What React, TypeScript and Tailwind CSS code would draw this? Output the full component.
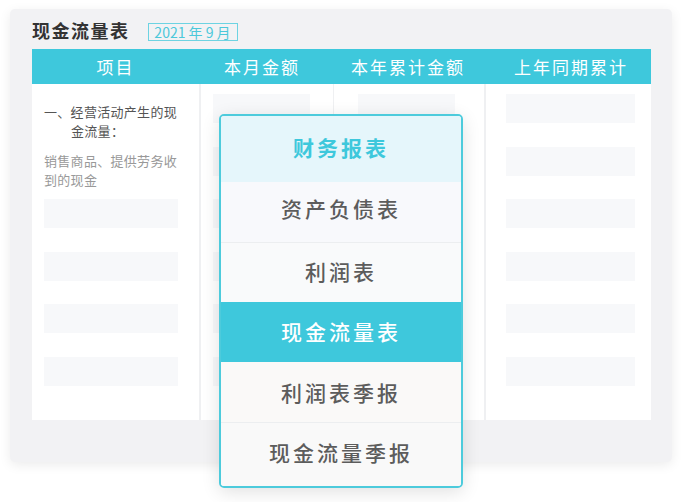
import React from "react";

const FONT = { fontFamily: '"Noto Sans CJK SC", "Noto Sans", sans-serif' };

const headers = ["项目", "本月金额", "本年累计金额", "上年同期累计"];
const menu = ["资产负债表", "利润表", "现金流量表", "利润表季报", "现金流量季报"];
const rowBg = ["bg-[#f8f9fc]", "bg-[#f9fafb]", "bg-[#3ec8dc]", "bg-[#faf9f8]", "bg-[#f9f9f9]"];
const rowPad = ["pb-[7px]", "pb-[1px]", "", "pt-[1px]", "pb-[4px]"];

function Bars({ count, w }: { count: number; w: string }) {
  return (
    <div className="flex flex-col gap-[23.6px]">
      {Array.from({ length: count }).map((_, i) => (
        <div key={i} className={`h-[29px] ${w} bg-[#f7f8fa]`} />
      ))}
    </div>
  );
}

export default function App() {
  return (
    <div className="relative w-[682px] h-[502px] bg-white overflow-hidden" style={FONT}>
      {/* report card */}
      <div className="ml-[10px] pt-[9px]">
        <div className="w-[662px] h-[453px] rounded-[5px] bg-[#f2f2f4] shadow-[0_3px_12px_rgba(0,0,0,0.08)] px-[22px] pt-[12px]">
          <div className="flex items-center h-[19px] mb-[9px]">
            <span className="text-[18px] leading-[19px] font-bold text-[#333] tracking-[1.5px]">现金流量表</span>
            <span className="ml-[18px] mt-[2px] w-[90px] h-[18px] border border-[#6dd3e2] flex items-center justify-center text-[14px] leading-none text-[#4cc8da]">
              2021 年 9 月
            </span>
          </div>

          {/* table */}
          <div className="w-[619px]">
            <div className="grid grid-cols-[167px_126px_166px_160px] h-[35px] bg-[#3ec8dc]">
              {headers.map((h) => (
                <div key={h} className="flex items-center justify-center text-white text-[17px] tracking-[2px]">
                  {h}
                </div>
              ))}
            </div>
            <div className="grid grid-cols-[167px_132px_150px_165px] gap-x-[1.5px] h-[336px] bg-[#eff0f2]">
              <div className="bg-white pl-[12px] pr-[15px] pt-[18px]">
                <p className="text-[13px] leading-[19px] tracking-[0.3px] text-[#555] pl-[27px] -indent-[27px]">
                  一、经营活动产生的现金流量：
                </p>
                <p className="mt-[11px] text-[13px] leading-[19px] tracking-[0.3px] text-[#999]">
                  销售商品、提供劳务收到的现金
                </p>
                <div className="mt-[10px]">
                  <Bars count={4} w="w-[134px]" />
                </div>
              </div>
              <div className="bg-white pl-[12px] pt-[10px]">
                <Bars count={6} w="w-[97px]" />
              </div>
              <div className="bg-white pl-[24px] pt-[10px]">
                <Bars count={6} w="w-[97px]" />
              </div>
              <div className="bg-white pl-[20px] pt-[10px]">
                <Bars count={6} w="w-[129px]" />
              </div>
            </div>
          </div>
        </div>
      </div>

      {/* report type menu */}
      <div className="absolute left-[219px] top-[114px] w-[244px] h-[374px] rounded-[5px] border-2 border-[#4dcbdc] overflow-hidden flex flex-col shadow-[0_4px_18px_rgba(0,0,0,0.12)]">
        <div className="h-[66px] pb-[2px] bg-[#e5f6fb] flex items-center justify-center text-[21px] font-bold text-[#3ec8dc] tracking-[3px]">
          财务报表
        </div>
        {menu.map((m, i) => (
          <div
            key={m}
            className={`${i === 4 ? "flex-1" : "h-[60px]"} ${rowBg[i]} ${rowPad[i]} ${
              i === 1 || i === 4 ? "border-t border-[#eceef0]" : ""
            } flex items-center justify-center text-[21px] font-medium tracking-[3px] ${
              i === 2 ? "text-white" : "text-[#5c5c5c]"
            }`}
          >
            {m}
          </div>
        ))}
      </div>
    </div>
  );
}
